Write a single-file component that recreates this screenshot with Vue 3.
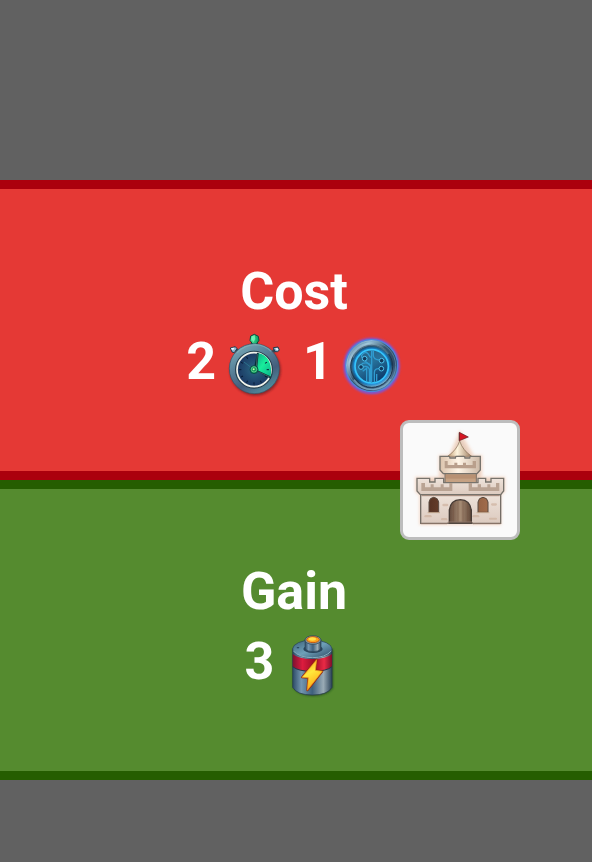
<script setup>
const costs = [
  { kind: 'time', amount: 2, label: 'time' },
  { kind: 'tech', amount: 1, label: 'technology' },
]
const gain = { kind: 'energy', amount: 3, label: 'energy' }
const ticks = [60, 90, 120, 150, 180, 210, 240, 270, 300, 330]
</script>

<template>
  <main class="board">
    <div class="card">
      <section class="panel cost">
        <h2 class="title">Cost</h2>
        <ul class="row">
          <li v-for="item in costs" :key="item.kind" class="resource">
            <span>{{ item.amount }}</span>
            <svg v-if="item.kind === 'time'" class="icon" viewBox="15 30 180 180" role="img" :aria-label="item.label">
              <defs>
                <linearGradient id="watchRim" x1="0" y1="0" x2="0.6" y2="1">
                  <stop offset="0" stop-color="#86b4be" />
                  <stop offset="0.35" stop-color="#5f8ba0" />
                  <stop offset="0.75" stop-color="#445d7c" />
                  <stop offset="1" stop-color="#4f889a" />
                </linearGradient>
                <radialGradient id="watchFace">
                  <stop offset="0" stop-color="#2a6684" />
                  <stop offset="1" stop-color="#1a3560" />
                </radialGradient>
                <linearGradient id="watchSlice" x1="0" y1="0" x2="1" y2="1">
                  <stop offset="0" stop-color="#0c9a80" />
                  <stop offset="0.5" stop-color="#18ed9b" />
                  <stop offset="1" stop-color="#0bb08a" />
                </linearGradient>
                <linearGradient id="watchGem" x1="0" x2="1">
                  <stop offset="0" stop-color="#54efa0" />
                  <stop offset="1" stop-color="#07985e" />
                </linearGradient>
                <filter id="watchShadow" x="-20%" y="-20%" width="140%" height="140%">
                  <feGaussianBlur stdDeviation="3" />
                </filter>
              </defs>
              <ellipse cx="106" cy="136" rx="77" ry="76" fill="#571a24" opacity="0.6" filter="url(#watchShadow)" />
              <path d="M95 45h17l4 19H90z" fill="#27404c" />
              <path d="M92 33l11-5 12 6 2 12-9 13H99l-9-13z" fill="url(#watchGem)" stroke="#13443c" stroke-width="3" />
              <path d="M96 34l8-3 2 11-5 9-7-8z" fill="#83ffc3" opacity="0.7" />
              <path d="M49 81l-8-6 5-8 11 8z" fill="#304453" />
              <path d="M31 69l15-4 5 6-8 12-7-2z" fill="#8db9d3" stroke="#243a4c" stroke-width="3" />
              <path d="M33 69l9-1 1 5-7 2z" fill="#e8f8ff" />
              <path d="M155 79l8-10 9 5-7 9z" fill="#304453" />
              <path d="M160 68l14-2 4 9-6 6-8-3z" fill="#8db9d3" stroke="#243a4c" stroke-width="3" />
              <path d="M166 69l7 1 2 5-5 1z" fill="#e8f8ff" />
              <circle cx="103" cy="131" r="75" fill="url(#watchRim)" stroke="#31566a" stroke-width="2" />
              <path d="M51 83Q73 60 108 59q25 1 46 20" fill="none" stroke="#8ab7bd" stroke-width="4" opacity="0.6" />
              <circle cx="102" cy="134" r="53" fill="url(#watchFace)" stroke="#26404e" stroke-width="8" />
              <circle cx="102" cy="134" r="51" fill="none" stroke="#f0f3ec" stroke-width="5" />
              <path d="M103 134L114 84q23 4 33 24 9 18 5 48z" fill="url(#watchSlice)" />
              <path v-for="angle in ticks" :key="angle" d="M102 89v7" :transform="`rotate(${angle} 102 134)`" stroke="#071c35" stroke-width="3" />
              <path d="M102 134L72 111" stroke="#2b718b" stroke-width="3" />
              <path d="M101 134l10-51 5 0-5 52 43 20-2 6z" fill="#082d38" />
              <path d="M112 87l-3 38m6 15l36 17" stroke="#a8c3b3" stroke-width="1" />
              <circle cx="102" cy="134" r="12" fill="#11955d" stroke="#0b4b4b" stroke-width="3" />
              <circle cx="102" cy="133" r="8" fill="none" stroke="#7ae79c" stroke-width="2" />
              <circle cx="101" cy="133" r="3" fill="#c6ffa9" />
            </svg>
            <svg v-else class="icon" viewBox="18 30 180 180" role="img" :aria-label="item.label">
              <defs>
                <linearGradient id="techRim" x1="0" y1="0" x2="1" y2="1">
                  <stop offset="0" stop-color="#3c5f7c" />
                  <stop offset="0.25" stop-color="#a3cadd" />
                  <stop offset="0.45" stop-color="#36566e" />
                  <stop offset="0.7" stop-color="#2d4a68" />
                  <stop offset="1" stop-color="#7fb2da" />
                </linearGradient>
                <linearGradient id="techRing" x1="0" y1="0" x2="0.5" y2="1">
                  <stop offset="0" stop-color="#1c3148" />
                  <stop offset="0.45" stop-color="#395b70" />
                  <stop offset="0.75" stop-color="#1a3450" />
                  <stop offset="1" stop-color="#84aec6" />
                </linearGradient>
                <linearGradient id="techFace" x1="0" y1="0" x2="0.6" y2="1">
                  <stop offset="0" stop-color="#2b5878" />
                  <stop offset="0.5" stop-color="#27719b" />
                  <stop offset="1" stop-color="#0d3c6b" />
                </linearGradient>
                <filter id="techGlow" x="-20%" y="-20%" width="140%" height="140%">
                  <feGaussianBlur stdDeviation="3" />
                </filter>
              </defs>
              <circle cx="107" cy="123" r="80" fill="none" stroke="#6a5cf0" stroke-width="8" filter="url(#techGlow)" />
              <circle cx="107" cy="122" r="78" fill="url(#techRim)" stroke="#4f86dc" stroke-width="4" />
              <circle cx="107" cy="122" r="72" fill="none" stroke="#6d9bbb" stroke-width="3" opacity="0.6" />
              <circle cx="107" cy="124" r="63" fill="url(#techRing)" stroke="#1c344b" stroke-width="3" />
              <path d="M51 98q10-29 44-37 42-5 62 26" fill="none" stroke="#7798a9" stroke-width="5" opacity="0.55" />
              <path d="M54 164q22 31 59 29 35-3 51-31" fill="none" stroke="#8bb8d0" stroke-width="5" opacity="0.65" />
              <circle cx="107" cy="124" r="52" fill="none" stroke="#0a8be0" stroke-width="9" filter="url(#techGlow)" />
              <circle cx="107" cy="124" r="50" fill="url(#techFace)" stroke="#35c4fa" stroke-width="5" />
              <g fill="none" stroke="#2f9bd0" stroke-width="4">
                <path d="M107 75v97M112 75v16q0 13 17 14M88 109q9 8 16 14v48M83 125q12-4 17 7v39M80 139l12-9v38M115 172v-29q0-13 15-12M122 170v-23" />
                <path d="M77 98v-7q10-14 19-5l8 12M77 116q19-7 27 6" />
              </g>
              <g fill="#12395c" stroke="#4dc2ee" stroke-width="3">
                <circle cx="86" cy="101" r="7" /><circle cx="75" cy="126" r="7" />
                <circle cx="137" cy="107" r="7" /><circle cx="136" cy="131" r="7" />
              </g>
            </svg>
          </li>
        </ul>
      </section>

      <section class="panel gain">
        <h2 class="title">Gain</h2>
        <div class="resource">
          <span>{{ gain.amount }}</span>
          <svg class="icon" viewBox="5 27 180 180" role="img" :aria-label="gain.label">
            <defs>
              <linearGradient id="cellBody">
                <stop offset="0" stop-color="#2c4a65" />
                <stop offset="0.22" stop-color="#7496b0" />
                <stop offset="0.5" stop-color="#3f607c" />
                <stop offset="0.78" stop-color="#9aabb5" />
                <stop offset="1" stop-color="#2a4156" />
              </linearGradient>
              <linearGradient id="cellRed">
                <stop offset="0" stop-color="#7d1130" />
                <stop offset="0.25" stop-color="#dc1c3e" />
                <stop offset="0.55" stop-color="#9c0c27" />
                <stop offset="0.8" stop-color="#ea2a45" />
                <stop offset="1" stop-color="#7d0e2b" />
              </linearGradient>
              <linearGradient id="cellTop" x1="0" y1="0" x2="1" y2="1">
                <stop offset="0" stop-color="#3c6079" />
                <stop offset="0.5" stop-color="#6ea0b8" />
                <stop offset="1" stop-color="#2b4863" />
              </linearGradient>
              <linearGradient id="cellBolt" x1="0" y1="0" x2="0.4" y2="1">
                <stop offset="0" stop-color="#ff8c18" />
                <stop offset="0.5" stop-color="#ffe83c" />
                <stop offset="1" stop-color="#ffa914" />
              </linearGradient>
              <filter id="cellShadow" x="-20%" y="-20%" width="140%" height="140%">
                <feGaussianBlur stdDeviation="3" />
              </filter>
            </defs>
            <path d="M36 70v116q20 24 59 24 42 0 60-24V70z" fill="#1d3820" opacity="0.7" filter="url(#cellShadow)" />
            <path d="M34 68v116q13 23 59 23t59-23V68z" fill="url(#cellBody)" stroke="#22384a" stroke-width="2" />
            <path d="M34 84q17 15 59 15t59-15v38q-16 14-59 14t-59-14z" fill="url(#cellRed)" />
            <path d="M34 122q16 14 59 14t59-14" fill="none" stroke="#263849" stroke-width="3" />
            <ellipse cx="93" cy="69" rx="59" ry="27" fill="url(#cellTop)" stroke="#263f55" stroke-width="2" />
            <path d="M36 75q18 20 57 20t57-20" fill="none" stroke="#86afc0" stroke-width="3" />
            <ellipse cx="95" cy="69" rx="29" ry="12" fill="#1b3249" opacity="0.8" />
            <path d="M71 41v27q6 9 24 9t24-9V41z" fill="url(#cellBody)" stroke="#2b4657" stroke-width="2" />
            <ellipse cx="95" cy="42" rx="24" ry="13" fill="#8099a6" stroke="#283f52" stroke-width="2" />
            <ellipse cx="95" cy="41" rx="19" ry="9" fill="#ffa41c" stroke="#c05a18" stroke-width="3" />
            <ellipse cx="93" cy="39" rx="11" ry="5" fill="#ffe04a" />
            <ellipse cx="50" cy="65" rx="4" ry="2" fill="#26415a" />
            <path d="M106 101L62 154l19 1-3 38 45-57-21-3z" fill="#922713" stroke="#922713" stroke-width="6" stroke-linejoin="round" />
            <path d="M106 101L62 154l19 1-3 38 45-57-21-3z" fill="url(#cellBolt)" stroke="#f09a20" stroke-width="2" />
          </svg>
        </div>
      </section>

      <div class="tile">
        <svg class="castle" viewBox="24 24 342 342" role="img" aria-label="castle">
          <defs>
            <linearGradient id="castleStone" x1="0" y1="0" x2="0" y2="1">
              <stop offset="0" stop-color="#eee3da" />
              <stop offset="1" stop-color="#dccabf" />
            </linearGradient>
            <linearGradient id="castleRoof">
              <stop offset="0" stop-color="#c39b70" />
              <stop offset="0.4" stop-color="#fff5de" />
              <stop offset="1" stop-color="#9e7d60" />
            </linearGradient>
            <linearGradient id="castleTower">
              <stop offset="0" stop-color="#dbc2ab" />
              <stop offset="0.45" stop-color="#fff5e7" />
              <stop offset="1" stop-color="#cbb7a5" />
            </linearGradient>
            <linearGradient id="castleDoor">
              <stop offset="0" stop-color="#654b3d" />
              <stop offset="0.5" stop-color="#a58b74" />
              <stop offset="1" stop-color="#604738" />
            </linearGradient>
            <linearGradient id="castleWindow">
              <stop offset="0" stop-color="#573222" />
              <stop offset="1" stop-color="#a16c4b" />
            </linearGradient>
            <filter id="castleGlow" x="-20%" y="-20%" width="140%" height="140%">
              <feGaussianBlur stdDeviation="5" />
            </filter>
          </defs>
          <path d="M77 326V240l-13-12v-39h71v-65h30l30-70 39 70h24v65h69v39l-12 12v86z" fill="#d6a789" stroke="#f0c3a7" stroke-width="8" filter="url(#castleGlow)" opacity="0.55" />
          <path d="M193 77V53" stroke="#454545" stroke-width="3" />
          <path d="M193 52l27 14-27 11z" fill="#d51622" stroke="#572124" stroke-width="2" />
          <path d="M194 78q9 28 36 46h-72q28-20 36-46z" fill="url(#castleRoof)" stroke="#806850" stroke-width="2" />
          <path d="M150 165h94v42h-94z" fill="#c5a183" stroke="#777069" stroke-width="3" />
          <path d="M150 179h94v12h-94z" fill="#a97e60" opacity="0.45" />
          <path d="M135 124h26q4 0 4 5h16q0-5 4-5h21q4 0 4 5h14q0-5 4-5h28v41l-10 11H145l-10-11z" fill="url(#castleTower)" stroke="#77736c" stroke-width="4" />
          <path d="M149 138h9v12h20v-7h9v7h17v-7h9v7h20v-12h10v22h-94z" fill="#b99f8c" />
          <path d="M77 236h240v89H77z" fill="url(#castleStone)" stroke="#746d66" stroke-width="4" />
          <path d="M66 190h38v11h16v-11h26v13h103v-13h23v11h16v-11h38v38l-9 11H76l-10-11z" fill="url(#castleStone)" stroke="#77736c" stroke-width="4" />
          <path d="M79 204h11v13h17v-9h9v9h21v-9h9v9h17v-13h9v24H79zM221 204h10v13h17v-9h10v9h19v-9h9v9h17v-13h10v24h-92z" fill="#b9a393" />
          <path d="M80 242h234" stroke="#9e8374" stroke-width="3" />
          <g fill="#cbad98" opacity="0.6">
            <rect x="142" y="266" width="18" height="8" rx="4" />
            <rect x="88" y="300" width="22" height="7" rx="4" /><rect x="138" y="309" width="19" height="7" rx="4" />
            <rect x="232" y="300" width="21" height="7" rx="4" /><rect x="288" y="265" width="18" height="7" rx="4" />
            <rect x="282" y="308" width="24" height="6" rx="3" />
          </g>
          <path d="M163 324v-38q3-31 33-32 29 1 33 32v38z" fill="url(#castleDoor)" stroke="#463b35" stroke-width="4" />
          <path d="M175 264v57m14-64v64m15-64v64m14-56v56" stroke="#74523f" stroke-width="2" opacity="0.65" />
          <g fill="url(#castleWindow)" stroke="#594a40" stroke-width="3">
            <path d="M102 292v-31q2-13 14-14 13 1 15 14v31zM249 292v-31q2-13 15-14 13 1 15 14v31z" />
          </g>
          <path d="M98 293h37m110 0h38" stroke="#c6aa91" stroke-width="3" />
          <path d="M77 326h79l5-5h69l5 5h82" fill="none" stroke="#8b7568" stroke-width="3" />
        </svg>
      </div>
    </div>
  </main>
</template>

<style>
body {
  margin: 0;
  background: #616161;
}
</style>

<style scoped>
.board {
  box-sizing: border-box;
  min-height: 100vh;
  padding: 180px 0 80px;
  background: #616161;
  font-family: Roboto, sans-serif;
}
.card {
  position: relative;
}
.panel {
  box-sizing: border-box;
  min-height: 300px;
  display: flex;
  flex-direction: column;
  align-items: center;
  justify-content: center;
  padding: 0 4px 6px 0;
  border: solid;
  border-width: 9px 0;
  color: #fff;
  font-size: 52px;
  line-height: 70px;
  font-weight: 700;
}
.cost {
  background: #e53935;
  border-color: #ab000d;
}
.gain {
  background: #558b2f;
  border-color: #255d00;
}
.title {
  margin: 0;
  font: inherit;
}
.row {
  display: flex;
  gap: 18px;
  margin: 0;
  padding: 0;
  list-style: none;
}
.resource {
  display: flex;
  align-items: center;
  gap: 9px;
}
.icon {
  display: block;
  width: 60px;
  height: 60px;
  margin-top: 6px;
  overflow: visible;
}
.tile {
  position: absolute;
  top: 240px;
  right: 72px;
  box-sizing: border-box;
  width: 120px;
  height: 120px;
  border: 3px solid #bdbdbd;
  border-radius: 9px;
  background: #fafafa;
}
.castle {
  display: block;
  width: 100%;
  height: 100%;
}
</style>
